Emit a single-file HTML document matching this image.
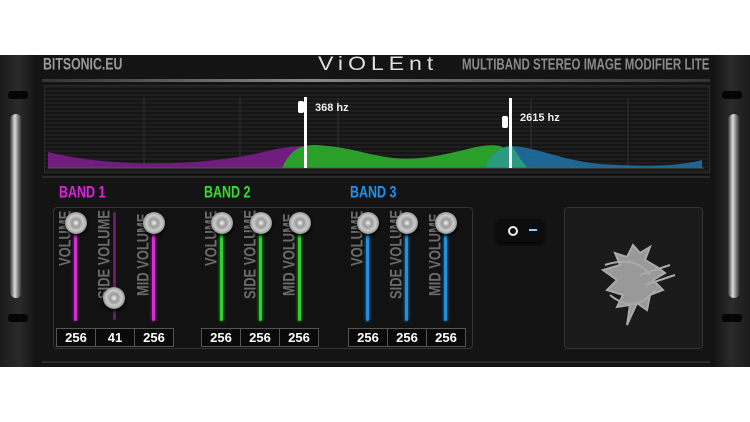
<!DOCTYPE html><html><head><style>
body{margin:0;width:750px;height:422px;background:#fff;position:relative;overflow:hidden;font-family:"Liberation Sans",sans-serif}
.p{position:absolute}
.vl{position:absolute;transform-origin:left top;color:#6a6a6a;font:bold 15px "Liberation Sans",sans-serif;white-space:nowrap;transform:rotate(-90deg) scale(0.86,1.1)}
.knob{position:absolute;width:22px;height:22px;border-radius:50%;background:radial-gradient(circle at 50% 50%,#f4f4f4 0,#999 25%,#ccc 50%,#888 75%,#555 100%);box-shadow:0 2px 3px #000}
.tr{position:absolute;width:3px;border-radius:2px}
.vals{position:absolute;top:328px;height:17px;display:flex;border:1px solid #555;background:#0a0a0a}
.vals div{width:38px;border-right:1px solid #555;color:#fff;font:bold 13px "Liberation Sans",sans-serif;text-align:center;line-height:17px}
.vals div:last-child{border-right:none}
.bl{position:absolute;top:184px;font:bold 16px "Liberation Sans",sans-serif;transform:scale(0.78,1.05);transform-origin:left top}
</style></head><body>
<div class="p" style="left:0;top:55px;width:750px;height:312px;background:#141414"></div>
<div class="p" style="left:0;top:55px;width:38px;height:312px;background:linear-gradient(90deg,#1b1b1b,#2a2a2a,#111)"></div>
<div class="p" style="left:712px;top:55px;width:38px;height:312px;background:linear-gradient(90deg,#111,#2a2a2a,#1b1b1b)"></div>
<div class="p" style="left:8px;top:91px;width:20px;height:8px;border-radius:3px;background:#050505"></div>
<div class="p" style="left:8px;top:314px;width:20px;height:8px;border-radius:3px;background:#050505"></div>
<div class="p" style="left:722px;top:91px;width:20px;height:8px;border-radius:3px;background:#050505"></div>
<div class="p" style="left:722px;top:314px;width:20px;height:8px;border-radius:3px;background:#050505"></div>
<div class="p" style="left:10px;top:114px;width:12px;height:184px;border-radius:6px;background:linear-gradient(90deg,#333,#ddd 40%,#777 70%,#222)"></div>
<div class="p" style="left:728px;top:114px;width:12px;height:184px;border-radius:6px;background:linear-gradient(90deg,#333,#ddd 40%,#777 70%,#222)"></div>
<div class="p" style="left:43px;top:56px;color:#9a9a9a;font:bold 16px 'Liberation Sans',sans-serif;transform:scale(0.77,1.05);transform-origin:left top;white-space:nowrap">BITSONIC.EU</div>
<div class="p" style="left:318px;top:54px;color:#ddd;font:19px 'Liberation Sans',sans-serif;letter-spacing:4px;transform:scaleX(1.22);transform-origin:left top">ViOLEnt</div>
<div class="p" style="left:462px;top:56px;color:#8a8a8a;font:bold 15px 'Liberation Sans',sans-serif;transform:scale(0.77,1.05);transform-origin:left top;white-space:nowrap">MULTIBAND STEREO IMAGE MODIFIER LITE</div>
<div class="p" style="left:42px;top:79px;width:668px;height:3px;background:linear-gradient(90deg,#333,#888 40%,#666 60%,#333)"></div>
<div class="p" style="left:44px;top:85px;width:664px;height:86px;background:repeating-linear-gradient(180deg,#1e1e1e 0,#1e1e1e 2px,#151515 2px,#151515 4px);border:1px solid #2a2a2a"></div>
<svg class="p" style="left:0;top:0" width="750" height="422">
<g stroke="#333" stroke-width="1"><line x1="144" y1="98" x2="144" y2="168"/><line x1="240" y1="98" x2="240" y2="168"/><line x1="338" y1="98" x2="338" y2="168"/><line x1="531" y1="98" x2="531" y2="168"/><line x1="628" y1="98" x2="628" y2="168"/></g>
<path d="M48 152 C100 165 180 168 250 155 C280 148 290 146 305 146 L320 168 L48 168Z" fill="#7a1c8a" opacity=".9"/>
<path d="M282 168 C290 150 300 145 315 145 C360 147 380 162 420 158 C460 154 480 142 500 146 C510 150 520 160 528 168Z" fill="#2aa02a"/>
<path d="M485 168 C490 155 500 146 512 146 C540 148 560 160 600 164 C650 167 680 166 702 160 L702 168Z" fill="#1e6ea0" opacity=".9"/>
<path d="M485 168 C490 155 500 146 512 146 C515 150 520 160 528 168Z" fill="#2a9a80"/>
<line x1="48" y1="168" x2="704" y2="168" stroke="#555"/>
<rect x="304" y="97" width="3" height="71" fill="#fff"/><rect x="298" y="101" width="6" height="12" rx="2" fill="#fff"/>
<rect x="509" y="98" width="3" height="70" fill="#fff"/><rect x="502" y="116" width="6" height="12" rx="2" fill="#fff"/>
<text x="315" y="111" fill="#eee" font-family="Liberation Sans" font-weight="bold" font-size="11">368 hz</text>
<text x="520" y="121" fill="#eee" font-family="Liberation Sans" font-weight="bold" font-size="11">2615 hz</text>
</svg>
<div class="p" style="left:42px;top:176px;width:668px;height:2px;background:#2a2a2a"></div>
<div class="bl" style="left:59px;color:#e020e0">BAND 1</div>
<div class="bl" style="left:204px;color:#30e030">BAND 2</div>
<div class="bl" style="left:350px;color:#2090f0">BAND 3</div>
<div class="p" style="left:53px;top:207px;width:418px;height:140px;border:1px solid #333;border-radius:4px;background:#121212"></div>
<div class="tr" style="left:74px;top:225px;height:96px;background:#d030d0;box-shadow:0 0 3px #c0c"></div>
<div class="tr" style="left:113px;top:212px;height:108px;background:#6a1a6a"></div>
<div class="tr" style="left:152px;top:225px;height:96px;background:#d030d0;box-shadow:0 0 3px #c0c"></div>
<div class="tr" style="left:220px;top:225px;height:96px;background:#30d030;box-shadow:0 0 3px #0c0"></div>
<div class="tr" style="left:259px;top:225px;height:96px;background:#30d030;box-shadow:0 0 3px #0c0"></div>
<div class="tr" style="left:298px;top:225px;height:96px;background:#30d030;box-shadow:0 0 3px #0c0"></div>
<div class="tr" style="left:366px;top:225px;height:96px;background:#2090e0;box-shadow:0 0 3px #08c"></div>
<div class="tr" style="left:405px;top:225px;height:96px;background:#2090e0;box-shadow:0 0 3px #08c"></div>
<div class="tr" style="left:444px;top:225px;height:96px;background:#2090e0;box-shadow:0 0 3px #08c"></div>
<div class="vl" style="left:56px;top:266px">VOLUME</div>
<div class="vl" style="left:95px;top:299px">SIDE VOLUME</div>
<div class="vl" style="left:134px;top:296px">MID VOLUME</div>
<div class="vl" style="left:202px;top:266px">VOLUME</div>
<div class="vl" style="left:241px;top:299px">SIDE VOLUME</div>
<div class="vl" style="left:280px;top:296px">MID VOLUME</div>
<div class="vl" style="left:348px;top:266px">VOLUME</div>
<div class="vl" style="left:387px;top:299px">SIDE VOLUME</div>
<div class="vl" style="left:426px;top:296px">MID VOLUME</div>
<div class="knob" style="left:65px;top:212px"></div>
<div class="knob" style="left:103px;top:287px"></div>
<div class="knob" style="left:143px;top:212px"></div>
<div class="knob" style="left:211px;top:212px"></div>
<div class="knob" style="left:250px;top:212px"></div>
<div class="knob" style="left:289px;top:212px"></div>
<div class="knob" style="left:357px;top:212px"></div>
<div class="knob" style="left:396px;top:212px"></div>
<div class="knob" style="left:435px;top:212px"></div>
<div class="vals" style="left:56px"><div>256</div><div>41</div><div>256</div></div>
<div class="vals" style="left:201px"><div>256</div><div>256</div><div>256</div></div>
<div class="vals" style="left:348px"><div>256</div><div>256</div><div>256</div></div>
<div class="p" style="left:497px;top:219px;width:46px;height:23px;background:#0c0c0c;border-radius:3px;box-shadow:0 2px 4px #000"></div>
<div class="p" style="left:508px;top:226px;width:6px;height:6px;border:2px solid #eee;border-radius:50%"></div>
<div class="p" style="left:529px;top:229px;width:8px;height:2px;background:#8cf"></div>
<div class="p" style="left:564px;top:207px;width:137px;height:140px;border:1px solid #333;border-radius:4px;background:#1a1a1a"></div>
<svg class="p" style="left:595px;top:235px" width="90" height="95"><g fill="#999" stroke="#aaa" stroke-width="2">
<path d="M38 10 L45 18 L55 12 L50 25 L62 32 L70 38 L58 45 L68 55 L55 60 L52 75 L42 68 L32 90 L35 70 L22 72 L28 60 L12 55 L22 45 L8 35 L25 30 L20 18 L32 22Z"/>
<path d="M10 30 Q40 20 55 40 M15 60 Q40 80 60 55 M50 50 L80 40 M45 40 L75 30" fill="none"/></g></svg>
<div class="p" style="left:42px;top:361px;width:668px;height:2px;background:#2a2a2a"></div>
</body></html>
